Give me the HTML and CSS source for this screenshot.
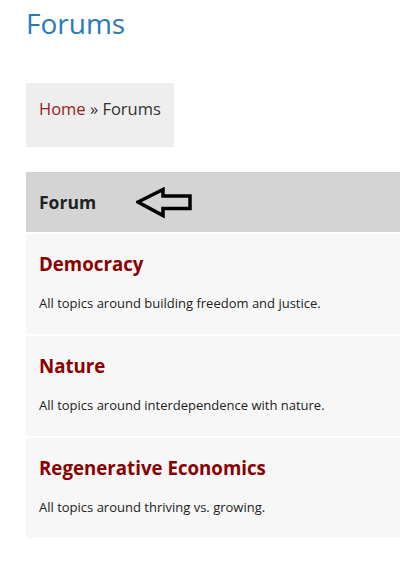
FILE: index.html
```html
<!DOCTYPE html>
<html lang="en">
<head>
<meta charset="utf-8">
<title>Forums</title>
<link rel="stylesheet" href="styles.css">
</head>
<body>
<main class="page">
  <h1 class="page-title">Forums</h1>
  <nav class="breadcrumb"><a class="crumb-link" href="#">Home</a> » Forums</nav>
  <section class="forum-table">
    <div class="forum-head">
      <span class="forum-head-label">Forum</span>
      <svg class="arrow" width="58" height="32" viewBox="0 0 58 32" aria-hidden="true">
        <path d="M2 15 L27 2.5 L27 9 L54 9 L54 21.5 L27 21.5 L27 28.5 Z" fill="none" stroke="#000" stroke-width="3.5" stroke-linejoin="miter"/>
      </svg>
    </div>
    <div class="forum-row">
      <a class="forum-name" href="#">Democracy</a>
      <p class="forum-desc">All topics around building freedom and justice.</p>
    </div>
    <div class="forum-row">
      <a class="forum-name" href="#">Nature</a>
      <p class="forum-desc">All topics around interdependence with nature.</p>
    </div>
    <div class="forum-row">
      <a class="forum-name" href="#">Regenerative Economics</a>
      <p class="forum-desc">All topics around thriving vs. growing.</p>
    </div>
  </section>
</main>
</body>
</html>
```

FILE: styles.css
```css
html, body {
  margin: 0;
  padding: 0;
  background: #ffffff;
}

body {
  font-family: "Open Sans", "Noto Sans", "Liberation Sans", sans-serif;
  color: #222222;
}

.page {
  padding-left: 26px;
  display: flex;
  flex-direction: column;
  align-items: flex-start;
}

.page-title {
  margin: 5px 0 0 0;
  font-size: 28px;
  line-height: 36px;
  font-weight: 400;
  color: #2a7ab9;
}

.breadcrumb {
  margin-top: 42px;
  background: #eeeeee;
  padding: 14px 13px 26px 13px;
  font-size: 16.5px;
  line-height: 24px;
  color: #333333;
}

.crumb-link {
  color: #9b1a1f;
  text-decoration: none;
}

.forum-table {
  margin-top: 25px;
  align-self: stretch;
  display: flex;
  flex-direction: column;
  gap: 2px;
}

.forum-head {
  height: 60px;
  background: #d4d4d4;
  display: flex;
  align-items: center;
  padding-left: 13px;
  gap: 40px;
}

.forum-head-label {
  font-size: 17.5px;
  line-height: 24px;
  font-weight: 700;
  color: #222222;
}

.arrow {
  display: block;
  margin-top: 1px;
}

.forum-row {
  height: 100px;
  box-sizing: border-box;
  background: #f7f7f7;
  padding: 17px 13px 0 13px;
  display: flex;
  flex-direction: column;
  align-items: flex-start;
  gap: 17px;
}

.forum-name {
  font-size: 18.7px;
  line-height: 26px;
  font-weight: 700;
  color: #8b0000;
  text-decoration: none;
}

.forum-desc {
  margin: 0;
  font-size: 13px;
  line-height: 18px;
  color: #222222;
}
```
